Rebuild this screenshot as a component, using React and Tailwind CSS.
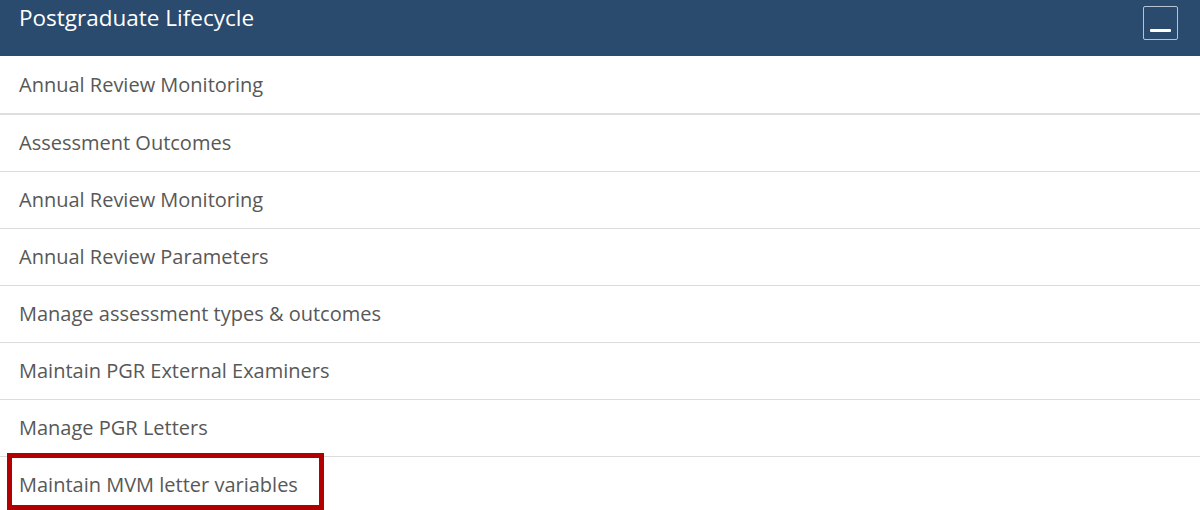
import React from "react";

const items = [
  "Annual Review Monitoring",
  "Assessment Outcomes",
  "Annual Review Monitoring",
  "Annual Review Parameters",
  "Manage assessment types & outcomes",
  "Maintain PGR External Examiners",
  "Manage PGR Letters",
  "Maintain MVM letter variables",
];

export default function App() {
  return (
    <div className="w-[1200px] h-[510px] overflow-hidden bg-white font-['Open_Sans',sans-serif]">
      <div className="h-[56px] bg-[#2a4a6e] flex items-start justify-between pl-[19px] pr-[22px]">
        <h2 className="text-white text-[22.5px] leading-none mt-[7px]">Postgraduate Lifecycle</h2>
        <button className="mt-[6px] w-[35px] h-[34px] border-[1.5px] border-[#b7c3d3] rounded-[2px] flex items-end justify-center pb-[7px]">
          <span className="block w-[21px] h-[3px] bg-white rounded-[1px]" />
        </button>
      </div>

      <ul>
        {items.map((label, i) => (
          <li
            key={i}
            className={`relative flex items-center pl-[19px] text-[20px] text-[#585858] ${
              i === 0 ? "h-[59px] pt-[1px] border-b-2 border-[#dedede]" : "h-[57px] border-b border-[#dcdcdc]"
            }`}
          >
            {label}
            {i === items.length - 1 && (
              <div className="absolute left-[7px] top-[-4px] w-[317px] h-[57px] border-[5px] border-[#b00000]" />
            )}
          </li>
        ))}
      </ul>
    </div>
  );
}
